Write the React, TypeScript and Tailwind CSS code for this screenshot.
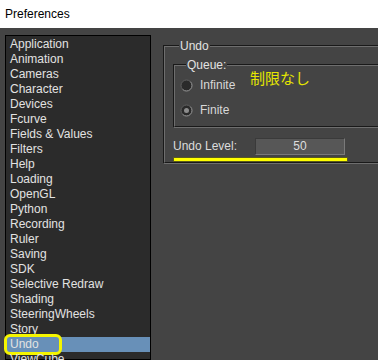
import React from 'react';

const categories = [
  'Application',
  'Animation',
  'Cameras',
  'Character',
  'Devices',
  'Fcurve',
  'Fields & Values',
  'Filters',
  'Help',
  'Loading',
  'OpenGL',
  'Python',
  'Recording',
  'Ruler',
  'Saving',
  'SDK',
  'Selective Redraw',
  'Shading',
  'SteeringWheels',
  'Story',
  'Undo',
  'ViewCube',
];

const Radio: React.FC<{ checked?: boolean }> = ({ checked }) => (
  <svg width="13" height="13" viewBox="0 0 13 13">
    <circle cx="6.5" cy="6.5" r="5.5" fill="#2a2a2a" stroke="#5e5e5e" strokeWidth="1" />
    <path d="M2.6 10.4 A5.5 5.5 0 0 0 10.4 2.6" fill="none" stroke="#8a8a8a" strokeWidth="1" />
    {checked && <circle cx="6.5" cy="6.5" r="2.5" fill="#8c8c8c" />}
  </svg>
);

export default function App() {
  return (
    <div
      className="w-[378px] h-[360px] overflow-hidden flex flex-col text-[12px]"
      style={{ fontFamily: '"Liberation Sans", Arial, sans-serif' }}
    >
      {/* Title bar */}
      <div className="h-[28px] bg-white flex items-center pl-[5px] text-black shrink-0">
        Preferences
      </div>

      <div className="flex-1 bg-[#444444] flex overflow-hidden">
        {/* Category list */}
        <div className="mt-[7px] ml-[5px] w-[146px] shrink-0 bg-[#2b2b2b] border border-black pt-[1px]">
          {categories.map((name) => {
            const selected = name === 'Undo';
            return (
              <div
                key={name}
                className={`relative h-[15px] leading-[15px] pl-[4px] text-[#e2e2e2] ${
                  selected ? 'bg-[#6890b8]' : ''
                }`}
              >
                {name}
                {selected && (
                  <span className="absolute left-[-2px] top-[-3px] w-[58px] h-[21px] rounded-[6px] border-[3px] border-[#f5f500]" />
                )}
              </div>
            );
          })}
        </div>

        {/* Settings panel */}
        <div className="flex-1 overflow-hidden pl-[12px] pt-[11px]">
          <fieldset className="w-[240px] border-2 border-[#6e6e6e] [border-style:groove] pl-[8px] pt-[1px]">
            <legend className="px-[1px] ml-[6px] text-[#e2e2e2] leading-[14px]">Undo</legend>

            <fieldset className="relative mt-[4px] w-[230px] border-2 border-[#6e6e6e] [border-style:groove] pl-[5px] pt-[3px] pb-[6px]">
              <legend className="px-[1px] ml-[6px] text-[#e2e2e2] leading-[14px]">Queue:</legend>
              <div className="flex items-center gap-[7px] h-[20px] text-[#d8d8d8]">
                <Radio />
                <span>Infinite</span>
              </div>
              <div className="flex items-center gap-[7px] h-[20px] mt-[5px] text-[#d8d8d8]">
                <Radio checked />
                <span>Finite</span>
              </div>
              <span
                className="absolute left-[75px] top-[-5px] text-[15px] text-[#e6e600]"
                style={{ fontFamily: '"Noto Sans CJK JP", sans-serif' }}
              >
                制限なし
              </span>
            </fieldset>

            <div className="flex items-center mt-[9px] h-[18px]">
              <span className="w-[82px] text-[#dcdcdc]">Undo Level:</span>
              <div className="w-[90px] h-[17px] bg-[#575757] border border-[#3a3a3a] border-r-[#7a7a7a] border-b-[#7a7a7a] flex items-center justify-center text-[#dedede]">
                50
              </div>
            </div>
            <div className="mt-[2px] w-[175px] h-[5px] bg-[#ffff00] border border-[#5a5a20]" />
          </fieldset>
        </div>
      </div>
    </div>
  );
}
